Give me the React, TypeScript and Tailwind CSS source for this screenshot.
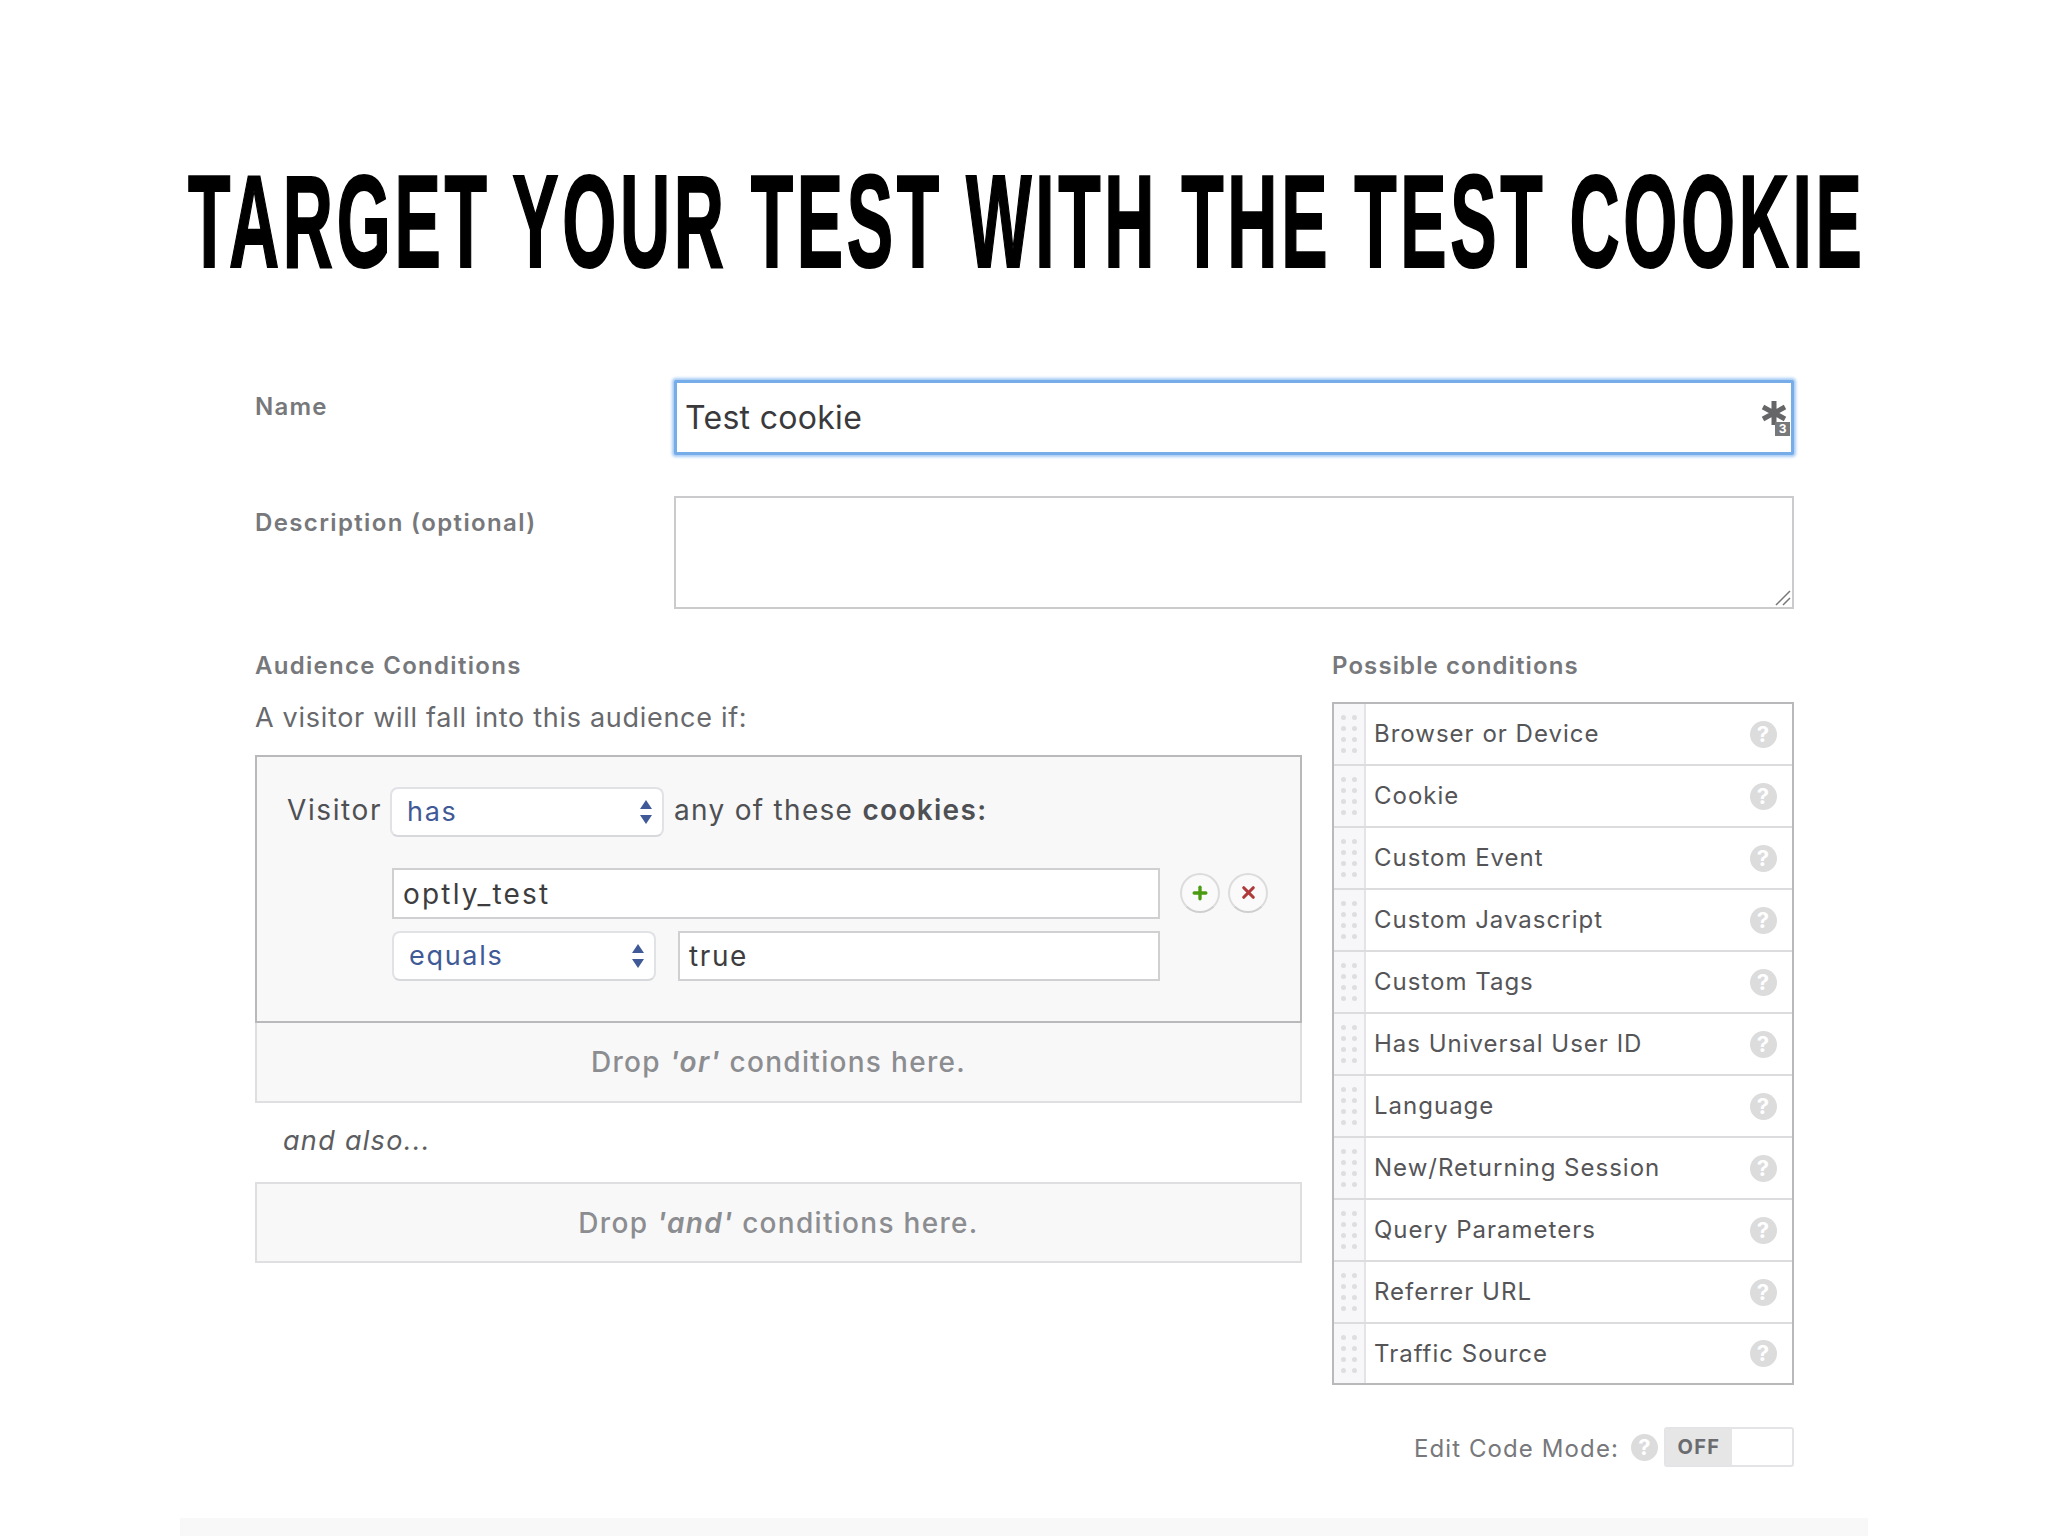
import { Plus, X } from 'lucide-react';

const conditions = [
  'Browser or Device',
  'Cookie',
  'Custom Event',
  'Custom Javascript',
  'Custom Tags',
  'Has Universal User ID',
  'Language',
  'New/Returning Session',
  'Query Parameters',
  'Referrer URL',
  'Traffic Source',
];

function HelpDot() {
  return (
    <span className="flex h-[27px] w-[27px] shrink-0 items-center justify-center rounded-full bg-[#dcdcdd] text-[22px] font-bold text-white">
      ?
    </span>
  );
}

function SelectBox({ label, width }: { label: string; width: string }) {
  return (
    <div className={`flex h-[50px] items-center justify-between rounded-[8px] border-2 border-[#e0e2e6] border-b-[#d6d8dc] bg-white pl-[15px] pr-[9px] text-[27px] tracking-[1.7px] text-[#3f5a96] ${width}`}>
      <span>{label}</span>
      <svg width="14" height="26" viewBox="0 0 14 26" fill="#3f5a96">
        <path d="M7 1l6 9H1zM7 25l-6-9h12z" />
      </svg>
    </div>
  );
}

function ConditionRow({ label }: { label: string }) {
  return (
    <div className="flex h-[62px] items-stretch border-b-2 border-[#dcdcde] last:h-[59px] last:border-b-0">
      <div className="flex w-[32px] shrink-0 items-center justify-center border-r-2 border-[#e4e4e8] bg-[#f7f7f9]">
        <div className="grid grid-cols-2 gap-x-[6px] gap-y-[6px]">
          {Array.from({ length: 8 }).map((_, i) => (
            <span key={i} className="h-[5px] w-[5px] rounded-full bg-[#dedee0]" />
          ))}
        </div>
      </div>
      <div className="flex flex-1 items-center justify-between pl-[8px] pr-[15px] text-[24px] tracking-[1px] text-[#555558]">
        <span>{label}</span>
        <HelpDot />
      </div>
    </div>
  );
}

export default function App() {
  return (
    <div className="h-[1536px] w-[2048px] overflow-hidden bg-white pt-[160px] font-['Inter',sans-serif]">
      <h1 className="h-[120px] pl-[188px] text-[131px] font-bold leading-[120px] text-black">
        <span className="inline-block origin-left scale-x-[0.53] whitespace-nowrap font-['Liberation_Sans',sans-serif] tracking-[7px] [-webkit-text-stroke:2px_black]">
          TARGET YOUR TEST WITH THE TEST COOKIE
        </span>
      </h1>

      <div className="ml-[255px] mt-[100px] w-[1539px]">
        <div className="grid grid-cols-[419px_1120px]">
          <label className="pt-[11px] text-[24px] font-semibold leading-[32px] tracking-[1.2px] text-[#77787b]">Name</label>
          <div className="relative h-[75px]">
            <input
              readOnly
              defaultValue="Test cookie"
              className="h-full w-full rounded-[2px] border-[3px] border-[#76ace8] bg-white pl-[8px] text-[32px] tracking-[0.3px] text-[#3a3a3c] shadow-[0_0_3px_2px_#a6cbf4] outline-none"
            />
            <svg className="absolute left-[1087px] top-[20px]" width="26" height="26" viewBox="0 0 26 26" stroke="#666668" strokeWidth="5">
              <path d="M13 1v24M2 7l22 12M2 19L24 7" />
            </svg>
            <span className="absolute left-[1101px] top-[42px] flex h-[14px] w-[15px] items-center justify-center bg-[#77787a] text-[12px] font-bold text-white">
              3
            </span>
          </div>
        </div>

        <div className="mt-[41px] grid grid-cols-[419px_1120px]">
          <label className="pt-[11px] text-[24px] font-semibold leading-[32px] tracking-[1.36px] text-[#77787b]">Description (optional)</label>
          <div className="relative h-[113px]">
            <textarea readOnly className="block h-full w-full resize-none rounded-none border-2 border-[#cbcbcd] bg-white outline-none" />
            <svg className="absolute bottom-[2px] right-[2px]" width="18" height="18" viewBox="0 0 18 18" stroke="#77787a" strokeWidth="1.5">
              <path d="M16 2L2 16M16 9l-7 7" />
            </svg>
          </div>
        </div>

        <div className="mt-[42px] flex items-start gap-[30px]">
          <div className="w-[1047px]">
            <div className="h-[30px] text-[24px] font-semibold leading-[30px] tracking-[1.3px] text-[#77787b]">Audience Conditions</div>
            <div className="mt-[21px] h-[32px] text-[27px] leading-[32px] tracking-[0.7px] text-[#68696c]">
              A visitor will fall into this audience if:
            </div>

            <div className="mt-[21px] h-[268px] border-2 border-[#b9b9bb] bg-[#f8f8f9] pl-[30px] pt-[30px] text-[28px] text-[#4f5053]">
              <div className="flex items-center">
                <span className="w-[103px] -translate-y-[2px] tracking-[1.6px]">Visitor</span>
                <SelectBox label="has" width="w-[274px]" />
                <span className="ml-[10px] -translate-y-[2px] tracking-[1.3px]">
                  any of these <b className="font-semibold">cookies:</b>
                </span>
              </div>
              <div className="ml-[105px] mt-[31px] flex items-center">
                <input
                  readOnly
                  defaultValue="optly_test"
                  className="h-[51px] w-[768px] border-2 border-[#d0d0d2] bg-white pl-[9px] tracking-[2.2px] text-[#3d3d40] outline-none"
                />
                <button className="ml-[20px] flex h-[40px] w-[40px] -translate-y-[1px] items-center justify-center rounded-full border-2 border-[#dcdcde] border-b-[#cfcfd1] bg-[#fafafa]">
                  <Plus size={20} strokeWidth={4} className="text-[#4a9a12]" />
                </button>
                <button className="ml-[8px] flex h-[40px] w-[40px] -translate-y-[1px] items-center justify-center rounded-full border-2 border-[#dcdcde] border-b-[#cfcfd1] bg-[#fafafa]">
                  <X size={19} strokeWidth={4} className="text-[#b03a3a]" />
                </button>
              </div>
              <div className="ml-[105px] mt-[12px] flex items-center gap-[22px]">
                <SelectBox label="equals" width="w-[264px]" />
                <input
                  readOnly
                  defaultValue="true"
                  className="h-[50px] w-[482px] border-2 border-[#d0d0d2] bg-white pl-[9px] tracking-[1.6px] text-[#3d3d40] outline-none"
                />
              </div>
            </div>

            <div className="flex h-[80px] items-center justify-center border-2 border-t-0 border-[#dfdfe1] bg-[#f8f8f9] text-[28px] font-medium tracking-[1.3px] text-[#8c8d90]">
              <span>
                Drop <b className="font-semibold italic">'or'</b> conditions here.
              </span>
            </div>

            <div className="mt-[18px] h-[40px] pl-[28px] text-[27px] italic leading-[40px] tracking-[1.3px] text-[#5c5d60]">and also...</div>

            <div className="mt-[21px] flex h-[81px] items-center justify-center border-2 border-[#dfdfe1] bg-[#f8f8f9] text-[28px] font-medium tracking-[1.3px] text-[#8c8d90]">
              <span>
                Drop <b className="font-semibold italic">'and'</b> conditions here.
              </span>
            </div>
          </div>

          <div className="w-[462px]">
            <div className="h-[30px] text-[24px] font-semibold leading-[30px] tracking-[1.1px] text-[#77787b]">Possible conditions</div>
            <div className="mt-[21px] h-[683px] border-2 border-[#b9b9bb] bg-white">
              {conditions.map((c) => (
                <ConditionRow key={c} label={c} />
              ))}
            </div>
            <div className="mt-[42px] flex items-center justify-end">
              <span className="translate-y-[2px] text-[24px] tracking-[1.1px] text-[#77787b]">Edit Code Mode:</span>
              <span className="ml-[12px]">
                <HelpDot />
              </span>
              <div className="ml-[6px] flex h-[40px] w-[130px] overflow-hidden rounded-[3px] border-2 border-[#e4e4e6] bg-white">
                <span className="flex w-[66px] items-center justify-center bg-[#e6e6e7] text-[20px] font-bold tracking-[1.3px] text-[#6b6c6f]">OFF</span>
              </div>
            </div>
          </div>
        </div>
      </div>

      <div className="mx-[180px] mt-[51px] h-[18px] bg-[#f8f8f8]" />
    </div>
  );
}
